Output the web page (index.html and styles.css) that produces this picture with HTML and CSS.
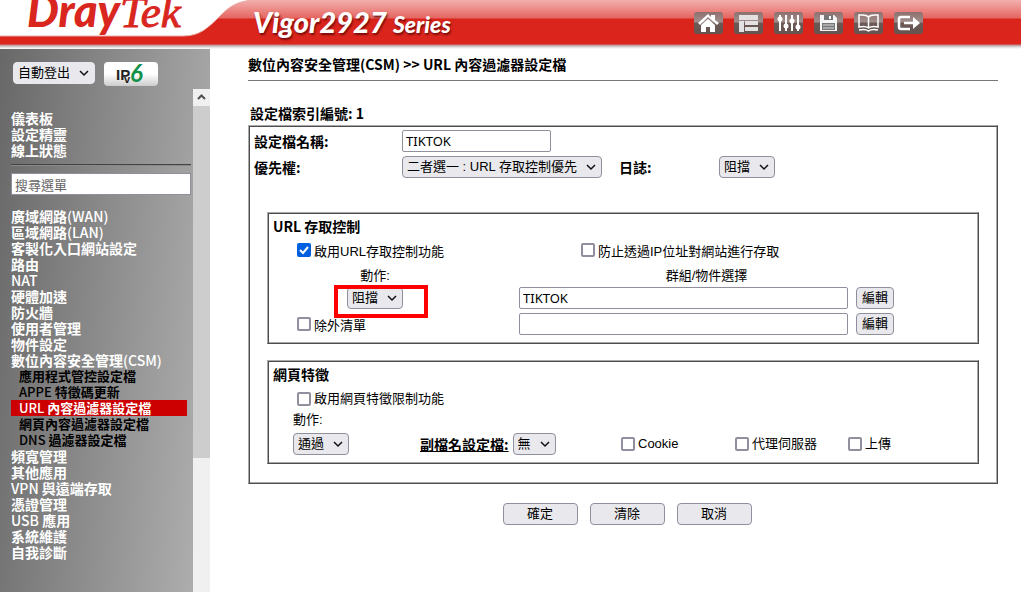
FILE: index.html
```html
<!DOCTYPE html>
<html lang="zh-Hant">
<head>
<meta charset="utf-8">
<title>Vigor2927 Series</title>
<link rel="stylesheet" href="styles.css">
</head>
<body>

<header class="header">
	<svg class="curve" width="262" height="40" viewBox="0 0 262 40" aria-hidden="true">
		<path d="M0 0H254C238 1 230 6 221 15C208 28 200 36 183 36H0Z" fill="#fff"/>
		<path d="M0 36H183C200 36 208 28 221 15C230 6 238 1 254 0" fill="none" stroke="#e9aaa6" stroke-width="1"/>
	</svg>
	<div class="logo"><span class="logo-dray">Dray</span><span class="logo-tek">Tek</span></div>
	<div class="model">Vigor2927 <small>Series</small></div>
	<nav class="tools">
		<a href="#" aria-label="Home"><svg viewBox="0 0 29 22"><path d="M4 11L14 2l3 3V3h4v5l4 3-2 2-9-8-8 8z" fill="#fff"/><path d="M14 7l7 6v7h-5v-5h-4v5H7v-7z" fill="#fff"/></svg></a>
		<a href="#" aria-label="Layout"><svg viewBox="0 0 29 22"><path d="M5 3h19v5H5zM5 9h5v11H5zM11 9h13v4H11zM11 15h13v4H11z" fill="#e2e0e0"/></svg></a>
		<a href="#" aria-label="Settings"><svg viewBox="0 0 29 22"><path d="M6 3v16M12 3v16M18 3v16M24 3v16" stroke="#fff" stroke-width="2"/><g fill="#fff"><circle cx="6" cy="7" r="2.5"/><circle cx="12" cy="14" r="2.5"/><circle cx="18" cy="9" r="2.5"/><circle cx="24" cy="15" r="2.5"/></g></svg></a>
		<a href="#" aria-label="Save"><svg viewBox="0 0 29 22"><path d="M6 3h14l3 3v13H6z" fill="#f5f5f5"/><path d="M10 3h9v5h-9zM8 11h13v7H8z" fill="#777"/><path d="M15 4h2v3h-2z" fill="#fff"/><path d="M9 13h11M9 16h11" stroke="#ddd" stroke-width="1"/></svg></a>
		<a href="#" aria-label="Manual"><svg viewBox="0 0 29 22"><path d="M14.500 5C12 2 8 3 5 3v12c4-1 7-1 9.500 1 2.500-2 5.500-2 9.500-1V3c-3 0-7-1-9.500 2zV16M5 18c4-1 7-1 9.500 1 2.500-2 5.500-2 9.500-1" fill="none" stroke="#fff" stroke-width="1.500"/></svg></a>
		<a href="#" aria-label="Logout"><svg viewBox="0 0 29 22"><path d="M16 5H7Q5 5 5 7v8q0 2 2 2h9M10 11h10" fill="none" stroke="#fff" stroke-width="2.500"/><path d="M19 5l7 6-7 6z" fill="#fff"/></svg></a>
	</nav>
</header>

<div class="page">
	<aside class="sidebar">
		<div class="session">
			<select class="select logout" aria-label="自動登出"><option>自動登出</option></select>
			<button class="ipv6" type="button" aria-label="IPv6">
				<svg width="32" height="24" viewBox="0 0 32 24"><text x="1" y="18" class="ip">IP</text><text x="9" y="21" class="ip-v">v</text><text x="15" y="20" class="ip-6">6</text></svg>
			</button>
		</div>
		<div class="frame">
			<div class="menu">
				<ul>
					<li><a href="#">儀表板</a></li>
					<li><a href="#">設定精靈</a></li>
					<li><a href="#">線上狀態</a></li>
				</ul>
				<hr>
				<input class="search" type="text" placeholder="搜尋選單" aria-label="搜尋選單">
				<ul>
					<li><a href="#">廣域網路<span>(WAN)</span></a></li>
					<li><a href="#">區域網路<span>(LAN)</span></a></li>
					<li><a href="#">客製化入口網站設定</a></li>
					<li><a href="#">路由</a></li>
					<li><a href="#"><span>NAT</span></a></li>
					<li><a href="#">硬體加速</a></li>
					<li><a href="#">防火牆</a></li>
					<li><a href="#">使用者管理</a></li>
					<li><a href="#">物件設定</a></li>
					<li><a href="#">數位內容安全管理<span>(CSM)</span></a>
						<ul class="submenu">
							<li><a href="#">應用程式管控設定檔</a></li>
							<li><a href="#"><span>APPE</span> 特徵碼更新</a></li>
							<li><a href="#" class="active"><span>URL</span> 內容過濾器設定檔</a></li>
							<li><a href="#">網頁內容過濾器設定檔</a></li>
							<li><a href="#"><span>DNS</span> 過濾器設定檔</a></li>
						</ul>
					</li>
					<li><a href="#">頻寬管理</a></li>
					<li><a href="#">其他應用</a></li>
					<li><a href="#"><span>VPN</span> 與遠端存取</a></li>
					<li><a href="#">憑證管理</a></li>
					<li><a href="#"><span>USB</span> 應用</a></li>
					<li><a href="#">系統維護</a></li>
					<li><a href="#">自我診斷</a></li>
				</ul>
			</div>
			<div class="scrollbar">
				<svg width="17" height="17" viewBox="0 0 17 17"><path d="M5 10l3.500-3.500L12 10" fill="none" stroke="#505050" stroke-width="2"/></svg>
				<div class="track"><div class="thumb"></div></div>
			</div>
		</div>
	</aside>

	<main class="main">
		<h1>數位內容安全管理(CSM) &gt;&gt; URL 內容過濾器設定檔</h1>
		<form>
			<h2 class="index">設定檔索引編號: 1</h2>
			<div class="box profile">
				<div class="row">
					<label class="name" for="profile">設定檔名稱:</label>
					<input class="text short" type="text" id="profile" value="TIKTOK">
				</div>
				<div class="row">
					<label class="name" for="priority">優先權:</label>
					<select class="select" id="priority"><option>二者選一 : URL 存取控制優先</option></select>
					<label class="log" for="log">日誌:</label>
					<select class="select" id="log"><option>阻擋</option></select>
				</div>

				<section class="box inner">
					<h2>URL 存取控制</h2>
					<div class="access">
						<label class="check"><input type="checkbox" checked>啟用URL存取控制功能</label>
						<label class="check by-ip"><input type="checkbox">防止透過IP位址對網站進行存取</label>
						<label class="center" for="action">動作:</label>
						<div class="center">群組/物件選擇</div>
						<div class="center">
							<div class="marked"><select class="select" id="action"><option>阻擋</option></select></div>
						</div>
						<div class="object">
							<input class="text" type="text" value="TIKTOK" aria-label="群組/物件選擇">
							<button class="button" type="button">編輯</button>
						</div>
						<label class="check"><input type="checkbox">除外清單</label>
						<div class="object">
							<input class="text" type="text" aria-label="除外清單">
							<button class="button" type="button">編輯</button>
						</div>
					</div>
				</section>

				<section class="box inner">
					<h2>網頁特徵</h2>
					<div class="feature">
						<label class="check"><input type="checkbox">啟用網頁特徵限制功能</label>
						<label class="feature-action" for="feature">動作:</label>
						<div class="options">
							<div><select class="select" id="feature"><option>通過</option></select></div>
							<div class="ext"><a href="#" id="ext-label">副檔名設定檔:</a>
								<select class="select" aria-labelledby="ext-label"><option>無</option></select></div>
							<label class="check"><input type="checkbox">Cookie</label>
							<label class="check"><input type="checkbox">代理伺服器</label>
							<label class="check"><input type="checkbox">上傳</label>
						</div>
					</div>
				</section>
			</div>

			<div class="actions">
				<button class="button wide" type="submit">確定</button>
				<button class="button wide" type="reset">清除</button>
				<button class="button wide" type="button">取消</button>
			</div>
		</form>
	</main>
</div>

</body>
</html>
```

FILE: styles.css
```css
*, *::after { box-sizing: border-box; }

body { margin: 0; min-height: 100vh; display: flex; flex-direction: column;
	font-family: "Liberation Sans", "Noto Sans CJK TC", sans-serif; font-size: 13px; color: #000; background: #fff; }

input, select, button { font: inherit; color: inherit; margin: 0; }
h1, h2, ul { margin: 0; padding: 0; }
ul { list-style: none; }

/* header */
.header { position: relative; display: flex; height: 49px; overflow: hidden;
	background: linear-gradient(#f3b0ae 0, #e56661 18px, #d9241c 19px, #db251d 44px, #b98f8d 45px, #ddd 47px, #fff 49px); }
.curve { position: absolute; left: 0; top: 0; }
.logo { position: relative; width: 253px; padding-left: 27px; color: #d9261e; font-size: 45px; line-height: 20px; white-space: nowrap; }
.logo-dray { font-family: Lato, sans-serif; font-weight: 900; font-style: italic; }
.logo-tek { font-family: "Liberation Serif", serif; font-style: italic; -webkit-text-stroke: 1px #d9261e; }
.model { font-family: Lato, sans-serif; font-weight: 900; font-style: italic; font-size: 29px; line-height: 44px; color: #fff;
	text-shadow: 1px 2px 2px rgba(80,0,0,0.7); white-space: nowrap; }
.model small { font-size: 23px; }
.tools { display: flex; gap: 11px; margin-left: auto; padding: 12px 98px 0 0; }
.tools a { height: 22px; border-radius: 3px; background: linear-gradient(#8e6f6d 0, #a08f8d 10px, #6c5956 11px, #655350 100%); }
.tools svg { display: block; width: 29px; height: 22px; }

.page { flex: 1; display: flex; }

/* left menu */
.sidebar { flex: 0 0 210px; display: flex; flex-direction: column; background: linear-gradient(95deg, #686868, #b2b2b2); }
.session { display: flex; align-items: flex-start; gap: 9px; height: 40px; padding: 13px 0 0 13px; }
.ipv6 { width: 54px; height: 24px; padding: 0; border: 0; border-radius: 4px; background: linear-gradient(#fff 50%, #ccc); }
.ipv6 svg { display: block; margin: 0 auto; }
.ip { font: bold 15px "Liberation Sans", sans-serif; fill: #222; }
.ip-v { font: bold 11px "Liberation Sans", sans-serif; fill: #222; }
.ip-6 { font: italic bold 24px Lato, sans-serif; fill: #12914a; }

.frame { flex: 1; display: flex; }
.menu { flex: 1; padding: 21px 2px 0 11px; font-family: "Noto Sans CJK TC", sans-serif; font-size: 14px; font-weight: bold; line-height: 16px; }
.menu li a { display: block; color: #fff; text-decoration: none; white-space: nowrap; }
.menu li span { font-weight: 500; }
.menu hr { margin: 6px 0 7px; border: 0; border-top: 1px solid #444; border-bottom: 1px solid #888; }
.search { display: block; width: 100%; height: 22px; margin-bottom: 13px; padding: 0 3px; border: 1px solid #8f8f9d; background: #fff; font-size: 13px; font-weight: normal; }
.search::placeholder { color: #666; }
.menu .submenu { margin-right: 4px; font-size: 13px; }
.menu .submenu a { padding-left: 8px; color: #000; }
.menu .submenu .active { background: #c00; color: #fff; }

.scrollbar { flex: 0 0 17px; display: flex; flex-direction: column; background: #f0f0f0; }
.scrollbar svg { display: block; }
.track { flex: 1; }
.thumb { height: 352px; background: #cdcdcd; }

/* content */
.main { flex: 1; min-width: 0; padding: 5px 23px 0 38px; }
h1, h2 { font-family: "Noto Sans CJK TC", sans-serif; font-size: 14px; font-weight: bold; line-height: 20px; }
h1 { padding-bottom: 6px; border-bottom: 1px solid #777; }
.index { padding: 22px 0 2px 2px; }

.box { border: 1px solid; border-color: #aaa #4d4d4d #4d4d4d #aaa; box-shadow: inset 1px 1px 0 #4d4d4d, inset -1px -1px 0 #aaa; }
.profile { padding: 4px 18px 19px 5px; }
.row { display: flex; align-items: center; margin-bottom: 4px; }
.name, .log, .ext a { font-family: "Noto Sans CJK TC", sans-serif; font-size: 14px; font-weight: bold; line-height: 20px; }
.name { width: 148px; }
.log { width: 100px; margin-left: 17px; }

.inner { margin: 16px 0 0 13px; padding: 3px 5px 8px; }
.row + .inner { margin-top: 34px; }

.text { flex: 1; min-width: 0; height: 22px; padding: 0 3px; border: 1px solid #8f8f9d; border-radius: 2px; background: #fff; font-family: "Noto Sans", "Noto Sans CJK TC", sans-serif; }
.short { flex: 0 0 149px; }

.select { appearance: none; height: 22px; padding: 0 23px 0 4px; border: 1px solid #8f8f9d; border-radius: 4px; line-height: 20px;
	background: #e9e9ed url("data:image/svg+xml,%3Csvg xmlns='http://www.w3.org/2000/svg' width='10' height='8'%3E%3Cpath d='M1 2l4 4 4-4' fill='none' stroke='%23111' stroke-width='1.500'/%3E%3C/svg%3E") no-repeat right 5px center; }
.logout { border-color: #e9e9ed; }

.button { height: 22px; padding: 0 5px; border: 1px solid #8f8f9d; border-radius: 4px; background: #e9e9ed; line-height: 20px; }
.wide { width: 75px; }

.check { display: flex; align-items: center; gap: 3px; white-space: nowrap; }
.check input { appearance: none; width: 14px; height: 14px; border: 2px solid #8f8f9d; border-radius: 2px; background: #fff; }
.check input:checked { border: 0; background: #0060df url("data:image/svg+xml,%3Csvg xmlns='http://www.w3.org/2000/svg' width='14' height='14'%3E%3Cpath d='M3 7l3 3 5-6' fill='none' stroke='%23fff' stroke-width='2'/%3E%3C/svg%3E") center; }

.access { display: grid; grid-template-columns: 156px 1fr; grid-template-rows: 22px 18px 22px 22px; gap: 4px 66px; align-items: center; padding: 3px 79px 0 24px; }
.by-ip { padding-left: 62px; }
.center { text-align: center; }
.object { display: flex; gap: 8px; }

/* red frame over the action list */
.marked { position: relative; display: inline-block; }
.marked::after { content: ""; position: absolute; left: -13px; top: -2px; width: 94px; height: 33px; border: 4px solid #f00; pointer-events: none; }
.marked .select { display: block; }

.feature { padding: 4px 0 0 20px; }
.feature .check { line-height: 22px; }
.feature > .check { padding-left: 4px; }
.feature-action { display: block; line-height: 20px; }
.options { display: grid; grid-template-columns: 127px 201px 114px 113px auto; align-items: center; margin-top: 3px; }
.ext { display: flex; align-items: center; gap: 4px; }
.ext a { color: #000; }

.actions { display: flex; justify-content: center; gap: 12px; padding: 19px 0 19px 8px; }
```
